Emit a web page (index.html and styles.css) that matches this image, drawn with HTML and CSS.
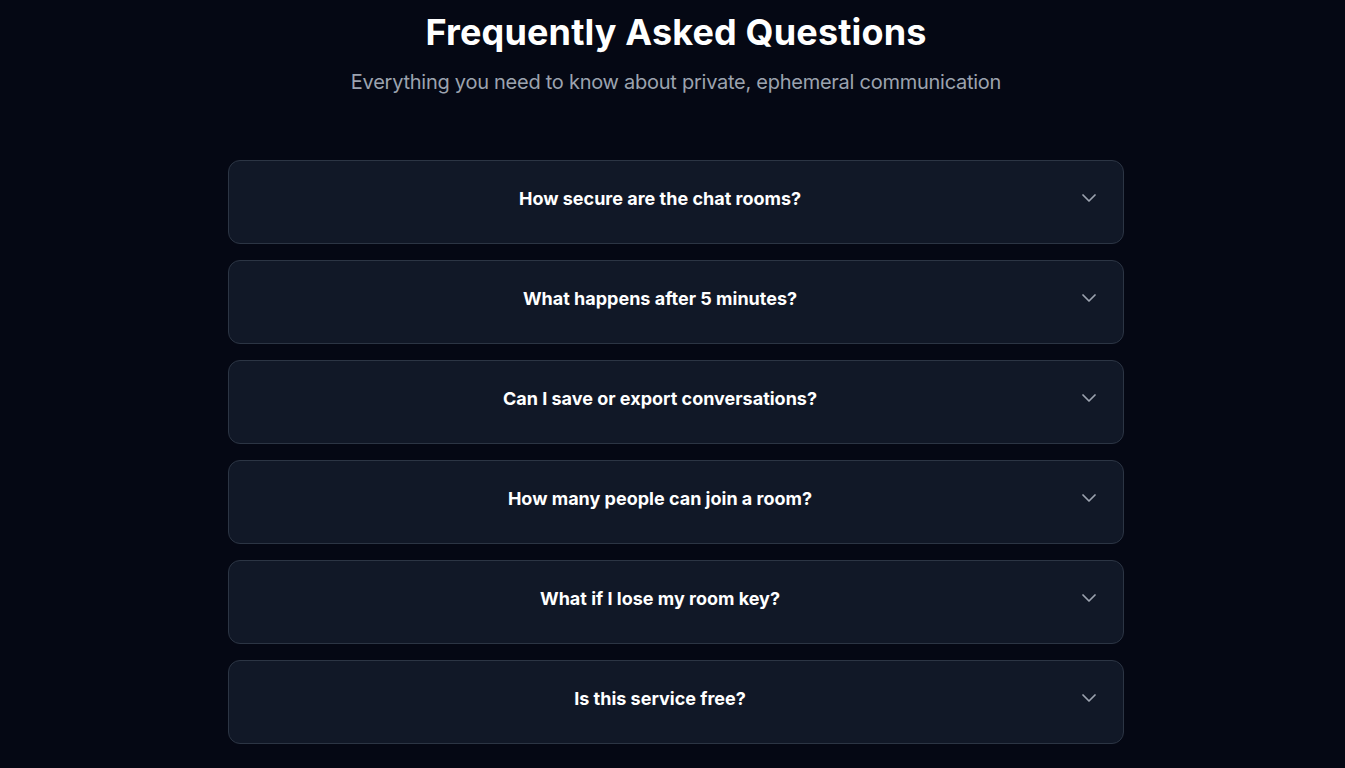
FILE: index.html
```html
<!DOCTYPE html>
<html lang="en">
<head>
<meta charset="utf-8">
<title>FAQ</title>
<link rel="stylesheet" href="styles.css">
</head>
<body>
<section class="faq">
  <h1 class="faq-title">Frequently Asked Questions</h1>
  <p class="faq-sub">Everything you need to know about private, ephemeral communication</p>
  <div class="faq-list">
    <button class="faq-item"><span class="q">How secure are the chat rooms?</span><svg class="chev" viewBox="0 0 24 24"><path d="m6 9 6 6 6-6"/></svg></button>
    <button class="faq-item"><span class="q">What happens after 5 minutes?</span><svg class="chev" viewBox="0 0 24 24"><path d="m6 9 6 6 6-6"/></svg></button>
    <button class="faq-item"><span class="q">Can I save or export conversations?</span><svg class="chev" viewBox="0 0 24 24"><path d="m6 9 6 6 6-6"/></svg></button>
    <button class="faq-item"><span class="q">How many people can join a room?</span><svg class="chev" viewBox="0 0 24 24"><path d="m6 9 6 6 6-6"/></svg></button>
    <button class="faq-item"><span class="q">What if I lose my room key?</span><svg class="chev" viewBox="0 0 24 24"><path d="m6 9 6 6 6-6"/></svg></button>
    <button class="faq-item"><span class="q">Is this service free?</span><svg class="chev" viewBox="0 0 24 24"><path d="m6 9 6 6 6-6"/></svg></button>
  </div>
</section>
</body>
</html>
```
FILE: styles.css
```css
* { box-sizing: border-box; }
html, body { margin: 0; padding: 0; }
body {
  background: #050814;
  font-family: Inter, "Noto Sans", sans-serif;
  color: #fff;
  height: 768px;
  overflow: hidden;
}
.faq {
  display: flex;
  flex-direction: column;
  align-items: center;
  padding-top: 10px;
  padding-left: 7px;
}
.faq-title {
  margin: 0;
  font-size: 36px;
  line-height: 44px;
  font-weight: 700;
  letter-spacing: 0.15px;
  color: #fff;
}
.faq-sub {
  margin: 16px 0 0;
  font-size: 20px;
  line-height: 24px;
  letter-spacing: -0.26px;
  color: #9ca3af;
}
.faq-list {
  margin-top: 66px;
  width: 896px;
  display: flex;
  flex-direction: column;
  gap: 16px;
}
.faq-item {
  display: flex;
  align-items: center;
  gap: 10px;
  height: 84px;
  padding: 0 22px 0 24px;
  background: #111827;
  border: 1px solid #2c3544;
  border-radius: 12px;
  font-family: inherit;
  color: #fff;
  cursor: pointer;
}
.q {
  flex: 1;
  text-align: center;
  font-size: 18px;
  font-weight: 700;
  position: relative;
  top: -4px;
}
.chev {
  width: 24px;
  height: 24px;
  fill: none;
  stroke: #9ca3af;
  stroke-width: 1.75;
  stroke-linecap: round;
  stroke-linejoin: round;
  position: relative;
  top: -4px;
}
```
